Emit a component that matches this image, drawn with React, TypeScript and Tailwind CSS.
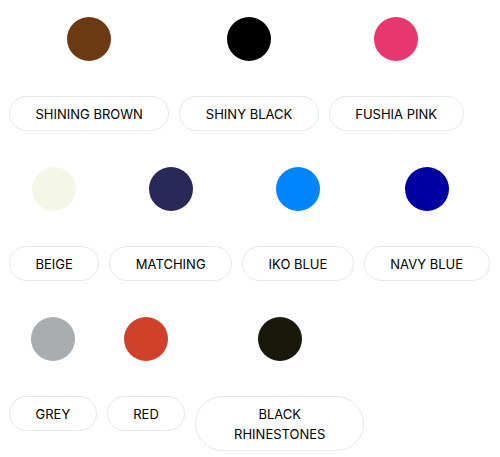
import React from "react";

const colors: { name: string; color: string }[] = [
  { name: "SHINING BROWN", color: "#6B3A12" },
  { name: "SHINY BLACK", color: "#000000" },
  { name: "FUSHIA PINK", color: "#E8366F" },
  { name: "BEIGE", color: "#F4F7E8" },
  { name: "MATCHING", color: "#2A2759" },
  { name: "IKO BLUE", color: "#0084FF" },
  { name: "NAVY BLUE", color: "#0000A0" },
  { name: "GREY", color: "#A9ADB0" },
  { name: "RED", color: "#D1402A" },
  { name: "BLACK RHINESTONES", color: "#1A170B" },
];

export default function App() {
  return (
    <div
      className="w-[500px] h-[457px] bg-white pl-[9px] pr-[4px] overflow-hidden"
      style={{ fontFamily: "Inter, 'Noto Sans', sans-serif" }}
    >
      <div className="flex flex-wrap gap-x-[10px] gap-y-[19px]">
        {colors.map((c) => (
          <div key={c.name} className="flex flex-col items-center">
            <div
              className="mt-[17px] mb-[35px] w-11 h-11 rounded-full"
              style={{ backgroundColor: c.color }}
            />
            <button className="max-w-[169px] rounded-full border border-slate-200 bg-white px-[25.5px] py-[6.5px] text-[13px] leading-5 text-black text-center">
              {c.name}
            </button>
          </div>
        ))}
      </div>
    </div>
  );
}
